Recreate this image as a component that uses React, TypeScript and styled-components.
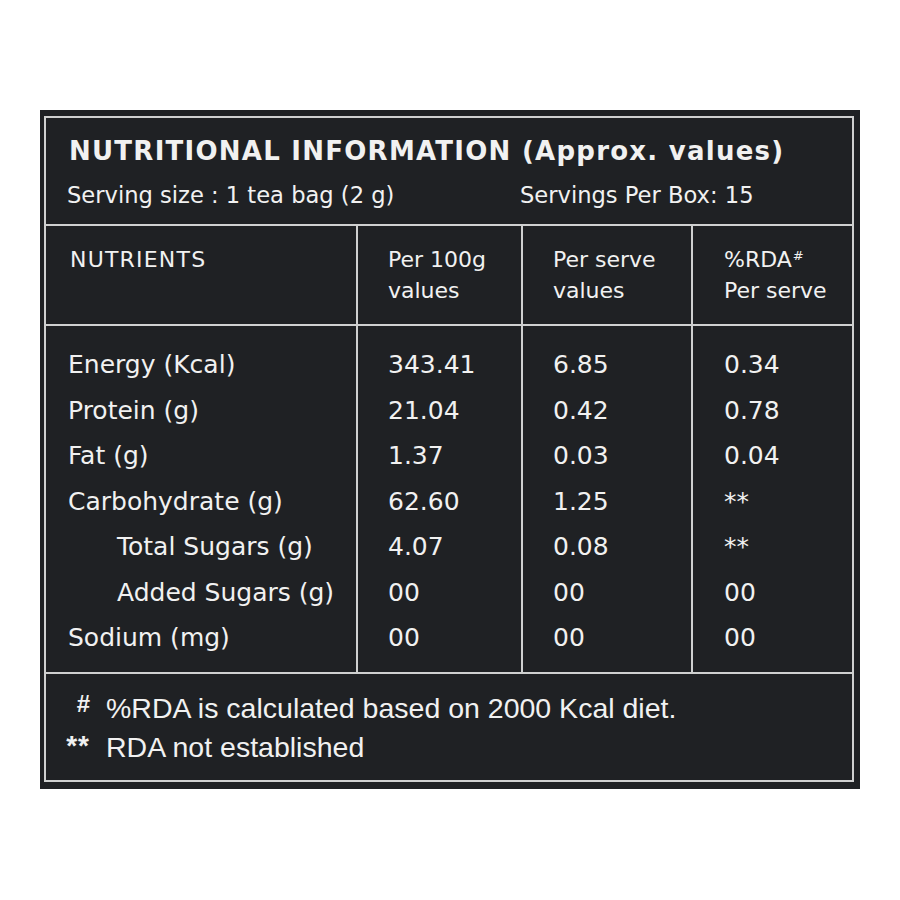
import React, { FC } from 'react';
import styled, { createGlobalStyle } from 'styled-components';

const GlobalStyle = createGlobalStyle`
  * { box-sizing: border-box; }
  body {
    margin: 0;
    background: #ffffff;
    font-family: "DejaVu Sans", "Liberation Sans", sans-serif;
  }
`;

const LINE = '#cfd0d0';
const INK = '#f1f1f1';
const BG = '#1f2124';

const Page = styled.div`
  padding: 110px 40px 0 40px;
`;

const Panel = styled.div`
  width: 820px;
  background: ${ BG };
  padding: 6px 6px 7px 4px;
`;

const Frame = styled.div`
  border: 2px solid ${ LINE };
  color: ${ INK };
`;

const TitleBlock = styled.div`
  height: 108px;
  padding: 16px 0 0 23px;
  border-bottom: 2px solid ${ LINE };
`;

const Title = styled.h1`
  margin: 0;
  font-size: 26px;
  line-height: 34px;
  font-weight: 700;
  letter-spacing: 1.25px;
`;

const ServingRow = styled.div`
  display: grid;
  grid-template-columns: 453px auto;
  margin-top: 12px;
  margin-left: -2px;
  font-size: 22.6px;
  line-height: 30px;
`;

const Grid = styled.div<{ $height: number; $top: number }>`
  display: grid;
  grid-template-columns: 310px 165px 170px 1fr;
  height: ${ p => p.$height + 2 }px;
  border-bottom: 2px solid ${ LINE };

  > div {
    padding-top: ${ p => p.$top }px;
  }
`;

const Cell = styled.div<{ $pad: number }>`
  padding-left: ${ p => p.$pad }px;
  & + & {
    border-left: 2px solid ${ LINE };
  }
`;

const HeadText = styled.div<{ $wide?: boolean }>`
  font-size: 22px;
  line-height: 31px;
  letter-spacing: ${ p => (p.$wide ? '1.2px' : '0') };
`;

const Sup = styled.sup`
  font-size: 13px;
  vertical-align: top;
  position: relative;
  top: -4px;
  margin-left: 1px;
`;

const Value = styled.div<{ $indent?: boolean }>`
  font-size: 25px;
  height: 45.5px;
  line-height: 45.5px;
  white-space: nowrap;
  padding-left: ${ p => (p.$indent ? 49 : 0) }px;
`;

const Footer = styled.div`
  height: 106px;
  padding-top: 15px;
  font-family: "Liberation Sans", Arial, sans-serif;
`;

const Note = styled.div`
  display: grid;
  grid-template-columns: 44px 1fr;
  column-gap: 16px;
  font-size: 28.5px;
  line-height: 39px;
`;

const Marker = styled.span<{ $small?: boolean }>`
  text-align: right;
  font-weight: 700;
  font-size: ${ p => (p.$small ? 24 : 28) }px;
  line-height: ${ p => (p.$small ? 30 : 36) }px;
  letter-spacing: ${ p => (p.$small ? 0 : 1) }px;
`;

interface Row {
  name: string;
  per100: string;
  perServe: string;
  rda: string;
  indent?: boolean;
}

const rows: Row[] = [
  { name: 'Energy (Kcal)', per100: '343.41', perServe: '6.85', rda: '0.34' },
  { name: 'Protein (g)', per100: '21.04', perServe: '0.42', rda: '0.78' },
  { name: 'Fat (g)', per100: '1.37', perServe: '0.03', rda: '0.04' },
  { name: 'Carbohydrate (g)', per100: '62.60', perServe: '1.25', rda: '**' },
  { name: 'Total Sugars (g)', per100: '4.07', perServe: '0.08', rda: '**', indent: true },
  { name: 'Added Sugars (g)', per100: '00', perServe: '00', rda: '00', indent: true },
  { name: 'Sodium (mg)', per100: '00', perServe: '00', rda: '00' },
];

const NutritionLabel: FC = () => (
  <Frame>
    <TitleBlock>
      <Title>NUTRITIONAL INFORMATION (Approx. values)</Title>
      <ServingRow>
        <span>Serving size : 1 tea bag (2 g)</span>
        <span>Servings Per Box: 15</span>
      </ServingRow>
    </TitleBlock>

    <Grid $height={ 98 } $top={ 18 }>
      <Cell $pad={ 24 }><HeadText $wide>NUTRIENTS</HeadText></Cell>
      <Cell $pad={ 30 }><HeadText>Per 100g</HeadText><HeadText>values</HeadText></Cell>
      <Cell $pad={ 30 }><HeadText>Per serve</HeadText><HeadText>values</HeadText></Cell>
      <Cell $pad={ 31 }><HeadText>%RDA<Sup>#</Sup></HeadText><HeadText>Per serve</HeadText></Cell>
    </Grid>

    <Grid $height={ 346 } $top={ 16 }>
      <Cell $pad={ 22 }>
        { rows.map(r => <Value key={ r.name } $indent={ r.indent }>{ r.name }</Value>) }
      </Cell>
      <Cell $pad={ 30 }>
        { rows.map(r => <Value key={ r.name }>{ r.per100 }</Value>) }
      </Cell>
      <Cell $pad={ 30 }>
        { rows.map(r => <Value key={ r.name }>{ r.perServe }</Value>) }
      </Cell>
      <Cell $pad={ 31 }>
        { rows.map(r => <Value key={ r.name }>{ r.rda }</Value>) }
      </Cell>
    </Grid>

    <Footer>
      <Note>
        <Marker $small>#</Marker>
        <span>%RDA is calculated based on 2000 Kcal diet.</span>
      </Note>
      <Note>
        <Marker>**</Marker>
        <span>RDA not established</span>
      </Note>
    </Footer>
  </Frame>
);

const App: FC = () => (
  <Page>
    <GlobalStyle />
    <Panel>
      <NutritionLabel />
    </Panel>
  </Page>
);

export default App;
